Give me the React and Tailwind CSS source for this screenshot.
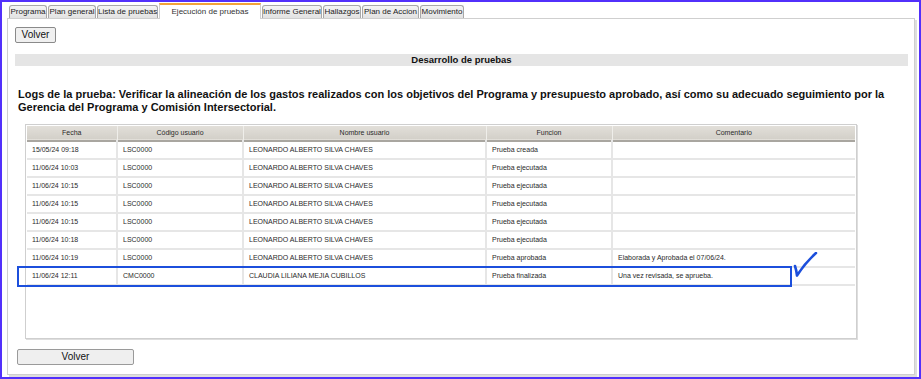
import React from "react";

const TABS = [
  { label: "Programa", w: "w-[38px]" },
  { label: "Plan general", w: "w-[48px]" },
  { label: "Lista de pruebas", w: "w-[61px]" },
  { label: "Ejecución de pruebas", w: "w-[102px]", active: true },
  { label: "Informe General", w: "w-[60px]" },
  { label: "Hallazgos", w: "w-[38px]" },
  { label: "Plan de Accion", w: "w-[57px]" },
  { label: "Movimiento", w: "w-[44px]" },
];

const LOGS = [
  ["15/05/24 09:18", "LSC0000", "LEONARDO ALBERTO SILVA CHAVES", "Prueba creada", ""],
  ["11/06/24 10:03", "LSC0000", "LEONARDO ALBERTO SILVA CHAVES", "Prueba ejecutada", ""],
  ["11/06/24 10:15", "LSC0000", "LEONARDO ALBERTO SILVA CHAVES", "Prueba ejecutada", ""],
  ["11/06/24 10:15", "LSC0000", "LEONARDO ALBERTO SILVA CHAVES", "Prueba ejecutada", ""],
  ["11/06/24 10:15", "LSC0000", "LEONARDO ALBERTO SILVA CHAVES", "Prueba ejecutada", ""],
  ["11/06/24 10:18", "LSC0000", "LEONARDO ALBERTO SILVA CHAVES", "Prueba ejecutada", ""],
  ["11/06/24 10:19", "LSC0000", "LEONARDO ALBERTO SILVA CHAVES", "Prueba aprobada", "Elaborada y Aprobada el 07/06/24."],
  ["11/06/24 12:11", "CMC0000", "CLAUDIA LILIANA MEJIA CUBILLOS", "Prueba finalizada", "Una vez revisada, se aprueba."],
];

const HEADERS = ["Fecha", "Código usuario", "Nombre usuario", "Funcion", "Comentario"];

export default function App() {
  return (
    <div className="relative w-[921px] h-[379px] box-border border-2 border-[#5230fb] bg-white font-['Liberation_Sans',Arial,sans-serif] text-[#222] overflow-hidden">
      {/* TABS */}
      <div className="flex items-end gap-[1px] pl-[7px] h-[16px]">
        {TABS.map((tab) =>
          tab.active ? (
            <div
              key={tab.label}
              className={`${tab.w} h-[16px] mb-[-1px] relative z-10 bg-white border-t-2 border-x border-[#f2a33a] border-x-[#d0d0d0] text-[8px] leading-[13px] text-center text-[#333]`}
            >
              {tab.label}
            </div>
          ) : (
            <div
              key={tab.label}
              className={`${tab.w} h-[13px] bg-gradient-to-b from-[#f4f4f4] to-[#e2e2e2] border border-b-0 border-[#a8a8a8] rounded-t-[3px] text-[8px] leading-[12px] text-center text-[#222] whitespace-nowrap`}
            >
              {tab.label}
            </div>
          )
        )}
      </div>

      {/* PANEL */}
      <div className="ml-[5px] w-[908px] h-[357px] border border-[#cfcfcf] shadow-[2px_2px_0_#dedede] bg-white">
        <button className="ml-[7px] mt-[8px] w-[41px] h-[16px] border border-[#8a8a8a] rounded-[2px] bg-[#f0f0f0] text-[10px] leading-[14px] text-[#111]">
          Volver
        </button>

        {/* SECTION BAR */}
        <div className="ml-[7px] mr-[6px] mt-[9px] h-[12px] bg-[#e5e5e5] text-[9.5px] leading-[12px] font-bold text-center text-[#111]">
          Desarrollo de pruebas
        </div>

        {/* HEADING */}
        <h2 className="ml-[10px] mr-[20px] mt-[22px] text-[11px] leading-[13px] font-bold text-[#111]">
          Logs de la prueba: Verificar la alineación de los gastos realizados con los objetivos del Programa y presupuesto aprobado, así como su adecuado seguimiento por la Gerencia del Programa y Comisión Intersectorial.
        </h2>

        {/* LOG TABLE */}
        <div className="ml-[17px] mt-[10px] w-[832px] h-[215px] border border-[#cfcfcf] shadow-[1px_1px_0_#dedede] p-[1px]">
          <table className="w-full table-fixed border-collapse text-[7px] text-[#2a2a2a]">
            <colgroup>
              <col className="w-[90px]" />
              <col className="w-[126px]" />
              <col className="w-[243px]" />
              <col className="w-[126px]" />
              <col />
            </colgroup>
            <thead>
              <tr className="h-[15px] bg-gradient-to-b from-[#e2dfd9] to-[#d3d0c9] border-b-2 border-[#a9a6a0]">
                {HEADERS.map((h) => (
                  <th
                    key={h}
                    className="font-normal text-center border-r border-[#efeeea] last:border-r-0"
                  >
                    {h}
                  </th>
                ))}
              </tr>
            </thead>
            <tbody>
              {LOGS.map((row, i) => (
                <tr key={i} className="h-[18px] border-b-2 border-[#e6e6e6]">
                  {row.map((cell, j) => (
                    <td
                      key={j}
                      className="px-[5px] whitespace-nowrap border-r-2 border-[#e6e6e6] last:border-r-0"
                    >
                      {cell}
                    </td>
                  ))}
                </tr>
              ))}
            </tbody>
          </table>
        </div>

        <button className="ml-[9px] mt-[10px] w-[117px] h-[16px] border border-[#9a9a9a] rounded-[2px] bg-[#efefef] text-[10px] leading-[14px] text-[#111]">
          Volver
        </button>
      </div>

      {/* ANNOTATION OVERLAY */}
      <div className="absolute left-[15px] top-[264px] w-[775px] h-[21px] border-2 border-[#1c4fdc]" />
      <svg
        className="absolute left-[791px] top-[250px]"
        width="26"
        height="28"
        viewBox="0 0 26 28"
        fill="none"
      >
        <path
          d="M2 14 Q3.5 18.5 4 23.5 Q12 11 23 1"
          stroke="#1c4fdc"
          strokeWidth="2.6"
          strokeLinecap="round"
          strokeLinejoin="round"
        />
      </svg>
    </div>
  );
}
